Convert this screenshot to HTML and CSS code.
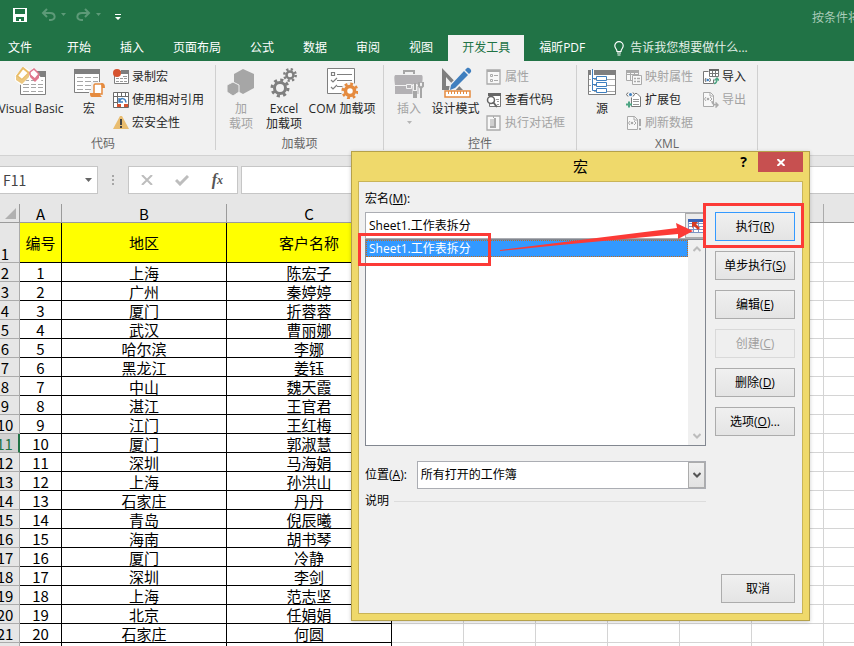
FILE: index.html
```html
<!DOCTYPE html>
<html lang="zh-CN">

<head>
    <meta charset="UTF-8">
    <title>宏</title>
    <link rel="stylesheet" href="styles.css">
</head>

<body>
    <div class="app">
        <header class="titlebar">
            <div class="quick">
                <button type="button" aria-label="保存"><svg width="14" height="14" viewBox="0 0 14 14"><path fill="#fff" fill-rule="evenodd" d="M0 0h14v14H0zM2 1v5h10V1zM3 9v4h3v-2h2v2h3V9z"/></svg></button>
                <button type="button" class="undo" aria-label="撤消"><svg width="26" height="14" viewBox="0 0 26 14"><path fill="none" stroke="#5d9a78" stroke-width="2" d="M6 1L2 5l4 4M2 5h7c6 0 6 7 1 7H8"/><path fill="#5d9a78" d="M20 5h5l-2.500 3z"/></svg></button>
                <button type="button" class="redo" aria-label="恢复"><svg width="26" height="14" viewBox="0 0 26 14"><path fill="none" stroke="#5d9a78" stroke-width="2" d="M9 1l4 4-4 4M13 5H6C0 5 0 12 5 12h2"/><path fill="#5d9a78" d="M20 5h5l-2.500 3z"/></svg></button>
                <button type="button" class="more" aria-label="自定义快速访问工具栏"><svg width="6" height="7" viewBox="0 0 6 7"><path fill="#fff" d="M0 0h6v1H0zM0 3h6L3 6z"/></svg></button>
            </div>
            <span class="doc-name">按条件将工作表拆分</span>
        </header>

        <nav class="tabs">
            <button type="button" class="file">文件</button>
            <button type="button">开始</button>
            <button type="button">插入</button>
            <button type="button">页面布局</button>
            <button type="button">公式</button>
            <button type="button">数据</button>
            <button type="button">审阅</button>
            <button type="button">视图</button>
            <button type="button" class="active">开发工具</button>
            <button type="button">福昕PDF</button>
            <button type="button" class="tell"><svg width="10" height="15" viewBox="0 0 10 15"><path fill="none" stroke="#fff" stroke-width="1.200" d="M3 10.500C3 8 .8 7.500.8 4.800a4.200 4.200 0 0 1 8.400 0C9.200 7.500 7 8 7 10.500zM3 12h4M3.500 14h3"/></svg>告诉我您想要做什么...</button>
        </nav>

        <section class="ribbon">
            <div class="group">
                <div class="group-body">
                    <button type="button" class="big vb">
                        <svg width="32" height="32" viewBox="0 0 32 32"><path fill="#fff" stroke="#7f7f7f" d="M5.500 6.500h25v21h-25z"/><path fill="#7f7f7f" d="M18 4h13v6H18z"/><path stroke="#a6a6a6" d="M8 13.500h6M16 13.500h5M23 13.500h5M8 17.500h6M16 17.500h5M23 17.500h5M8 20.500h6M16 20.500h5M23 20.500h5M8 24.500h6M16 24.500h5M23 24.500h5"/><path fill="#fff" stroke="#fff" stroke-width="2" d="M9 1L1 9v4l5 4 8-8V4zM18 3l-1 5 7 7 2-3z"/><path fill="#fff" stroke="#e9bd68" stroke-width="2" d="M8 1l6 5-7 7-5-4z"/><path fill="#ecc77f" d="M1 9l6 4 7-7v4l-7 7-6-4z"/><path fill="#fff" stroke="#e0778e" stroke-width="1.500" d="M15 5l4-3 5 5-4 5-5-4z"/><path fill="#e0778e" d="M15 7l5 5 4-5v4l-4 4-5-5z"/></svg>
                        <span>Visual Basic</span>
                    </button>
                    <button type="button" class="big macro">
                        <svg width="32" height="32" viewBox="0 0 32 32"><path fill="#fff" stroke="#7f7f7f" d="M1.500 2.500h25v23h-25z"/><path fill="#7f7f7f" d="M1 2h26v5H1z"/><path stroke="#a6a6a6" d="M4 10.500h6M12 10.500h6M20 10.500h5M4 14.500h6M12 14.500h6M20 14.500h5M4 18.500h6M12 18.500h6M4 22.500h6M12 22.500h6"/><path fill="#fff" stroke="#f1f1f1" stroke-width="4" d="M20 17h11v4h-2v8H18v-4h2z"/><path fill="#fff" stroke="#e58b3f" stroke-width="1.500" d="M22 17h7v10h-8V18z"/><path fill="#e58b3f" d="M28 16c3 0 4 1 4 5h-3zM17 26h10c0 2 1 3 2 4H19c-2 0-2-2-2-4z"/></svg>
                        <span>宏</span>
                    </button>
                    <div class="smalls">
                        <button type="button"><svg width="16" height="16" viewBox="0 0 16 16"><path fill="#fff" stroke="#7f7f7f" d="M1.500 2.500h14v12h-14z"/><path fill="#7f7f7f" d="M8 1h8v4H8z"/><path stroke="#9a9a9a" d="M3 9.500h3M7 9.500h3M11 9.500h3M3 12.500h3M7 12.500h3M11 12.500h3M10 7.500h4"/><circle cx="4" cy="4" r="4" fill="#d6532f"/></svg>录制宏</button>
                        <button type="button"><svg width="16" height="16" viewBox="0 0 16 16"><path fill="#fff" stroke="#6b6b6b" d="M.5.5h15v15H.5zM4.500 0v16M0 4.500h16M0 10.500h5M8.500 0v5M12.500 0v5"/><path fill="#fff" d="M5 5h10v6H5z"/><path fill="none" stroke="#3f7fbf" stroke-width="1.500" d="M6 6v4h4M6.500 9.500c1-4 6-4 6.500 1"/><path fill="#d6532f" d="M4 12h4v3H4zM11 12h4v3h-4z"/></svg>使用相对引用</button>
                        <button type="button"><svg width="16" height="16" viewBox="0 0 16 16"><path fill="#e9bd70" d="M7 1h2l7 13H0z"/><path fill="#444" d="M7 4h2v6H7zM7 11h2v2H7z"/></svg>宏安全性</button>
                    </div>
                </div>
                <div class="group-name">代码</div>
            </div>

            <div class="group">
                <div class="group-body">
                    <button type="button" class="big addin" disabled>
                        <svg width="32" height="32" viewBox="0 0 32 32"><path fill="#a6a6a6" d="M18 2l11 5v14l-11 6-9-5V7z"/><path fill="#a6a6a6" stroke="#f1f1f1" d="M8 15l6 3v7l-6 4-6-4v-7z"/></svg>
                        <span>加<br>载项</span>
                    </button>
                    <button type="button" class="big excel">
                        <svg width="32" height="32" viewBox="0 0 32 32"><g fill="none" stroke="#7f7f7f"><circle cx="12" cy="21" r="5.500" stroke-width="3"/><circle cx="12" cy="21" r="8" stroke-width="3" stroke-dasharray="3.100 3.180"/><circle cx="22" cy="8" r="3.500" stroke-width="2.500"/><circle cx="22" cy="8" r="5.700" stroke-width="2.500" stroke-dasharray="2.200 2.280"/></g></svg>
                        <span>Excel<br>加载项</span>
                    </button>
                    <button type="button" class="big com">
                        <svg width="32" height="32" viewBox="0 0 32 32"><path fill="#fff" stroke="#7f7f7f" d="M1.500 1.500h27v25h-27z"/><path fill="none" stroke="#7f7f7f" d="M5.500 5.500h3v3h-3zM11 7.500h15M11 13.500h15M11 19.500h8M5 13l2 2 4-4M5 20l2 2 4-4" stroke-width="1.200"/><circle cx="24" cy="24" r="9" fill="#f1f1f1"/><circle cx="24" cy="24" r="4.500" fill="#fff" stroke="#e58b3f" stroke-width="3.500"/><circle cx="24" cy="24" r="7" fill="none" stroke="#e58b3f" stroke-width="3" stroke-dasharray="2.700 2.800"/></svg>
                        <span>COM 加载项</span>
                    </button>
                </div>
                <div class="group-name">加载项</div>
            </div>

            <div class="group">
                <div class="group-body">
                    <button type="button" class="big insert" disabled>
                        <svg width="32" height="32" viewBox="0 0 32 32"><path fill="none" stroke="#a6a6a6" stroke-width="2" d="M11 7V4h10v3"/><path fill="#b3b1b4" d="M3 8h25c2 0 2 2 1 10H2C1 10 1 8 3 8zM2 19h28v8H2z"/><path fill="#b3b1b4" stroke="#f1f1f1" d="M13.500 17.500h5v4h-5z"/><path stroke="#f1f1f1" stroke-width="5" d="M22 17v14M28 16v14"/><path fill="none" stroke="#a6a6a6" stroke-width="2" d="M22 16v7M26 15v4l2 2 2-2v-4M28 21v10"/><path stroke="#a6a6a6" stroke-width="4" d="M22 24v7"/></svg>
                        <span>插入</span>
                        <svg class="drop" width="5" height="3" viewBox="0 0 5 3"><path fill="#b5b5b5" d="M0 0h5L2.500 3z"/></svg>
                    </button>
                    <button type="button" class="big design">
                        <svg width="32" height="32" viewBox="0 0 32 32"><path fill="#7f7f7f" fill-rule="evenodd" d="M2 1l21 22H2zM6 10v9h8z"/><path fill="#f1f1f1" d="M10 17L27 0l5 5-18 20-6 2z"/><path fill="#fff" stroke="#e58b3f" stroke-width="1.500" d="M5 24h25v6H5z"/><path stroke="#e58b3f" d="M8.500 24v3M11.500 24v3M14.500 24v3M17.500 24v3M20.500 24v3M23.500 24v3M26.500 24v3"/><path fill="#3f7fbf" d="M11 18L24 4l4 4-13 13-5 2zM25 3l2-2c2-1 5 2 4 4l-2 2z"/></svg>
                        <span>设计模式</span>
                    </button>
                    <div class="smalls">
                        <button type="button" disabled><svg width="16" height="16" viewBox="0 0 16 16"><path fill="#f8f8f8" stroke="#aaa" stroke-width="1.300" d="M1 1h13v14H1z"/><path stroke="#aaa" stroke-width="2" d="M1 2h13"/><path fill="none" stroke="#aaa" d="M4.500 5.500h2v2h-2zM4.500 10.500h2v2h-2zM8 6.500h4M8 11.500h4"/></svg>属性</button>
                        <button type="button"><svg width="16" height="16" viewBox="0 0 16 16"><path fill="#fff" stroke="#777" d="M3.500 2.500h11v12h-11z"/><path fill="#666" d="M2 1h13v3H2z"/><path stroke="#999" d="M10 7.500h3M11 9.500h2M11 12.500h2"/><circle cx="5" cy="8" r="3.500" fill="#fff" stroke="#666" stroke-width="1.500"/><path stroke="#666" stroke-width="2" d="M7 10l4 5"/></svg>查看代码</button>
                        <button type="button" disabled><svg width="16" height="16" viewBox="0 0 16 16"><path fill="#f8f8f8" stroke="#aaa" stroke-width="1.300" d="M1 1h13v14H1z"/><path stroke="#aaa" d="M7.500 1v14" stroke-dasharray="2 8"/><path fill="#d0d0d0" d="M4 4h4v8H4z"/><path fill="#aaa" d="M8 3h2v10H4v-2h4z"/></svg>执行对话框</button>
                    </div>
                </div>
                <div class="group-name">控件</div>
            </div>

            <div class="group">
                <div class="group-body">
                    <button type="button" class="big source">
                        <svg width="32" height="32" viewBox="0 0 32 32"><path fill="#fff" stroke="#7f7f7f" d="M2.500 3.500h27v24h-27z"/><path fill="#7f7f7f" d="M2 3h28v5H2z"/><path stroke="#a6a6a6" d="M3 12.500h8M21 12.500h8M3 18.500h8M21 18.500h8M3 24.500h8M21 24.500h8"/><path stroke="#fff" stroke-width="3" d="M6.500 3v22"/><path fill="#fff" stroke="#3f7fbf" d="M10.500 9.500h10v4h-10zM10.500 15.500h10v4h-10zM10.500 21.500h10v4h-10z"/><path fill="none" stroke="#3f7fbf" d="M6.500 2v21.500h4M6.500 11.500h4M6.500 17.500h4"/></svg>
                        <span>源</span>
                    </button>
                    <div class="smalls wide">
                        <button type="button" disabled><svg width="16" height="16" viewBox="0 0 16 16"><path fill="#f8f8f8" stroke="#aaa" d="M.5 1.500h12v10H.5zM.5 5.500h12M4.500 2v9M8.500 2v9"/><path fill="#aaa" d="M0 1h13v3H0z"/><path fill="#f8f8f8" stroke="#aaa" d="M6.500 6.500h9v9h-9z"/><path stroke="#aaa" d="M8 9.500h2M11 9.500h3M8 12.500h2M11 12.500h3" stroke-width="1.500"/></svg>映射属性</button>
                        <button type="button"><svg width="16" height="16" viewBox="0 0 16 16"><path fill="#fff" stroke="#777" d="M5.500 5.500V14.500h9V5L11 1.500H9"/><path stroke="#999" d="M7 7.500h6M7 9.500h6M7 12.500h6"/><path fill="none" stroke="#666" d="M2 .5L.5 2.500 2 4.500M7 .5l1.500 2L7 4.500"/><circle cx="4.500" cy="2.500" r="1.500" fill="#3f7fbf"/><path stroke="#4da583" stroke-width="2" d="M0 12.500h6M3 9.500v6"/></svg>扩展包</button>
                        <button type="button" disabled><svg width="16" height="16" viewBox="0 0 16 16"><path fill="#f8f8f8" stroke="#aaa" d="M1.500 1.500h7l3 3v10h-10z"/><path fill="none" stroke="#aaa" d="M8 1v4h4M4 6L2.500 8 4 10M8 6l2 2-2 2"/><circle cx="6" cy="8" r="1.300" fill="#aaa"/><path stroke="#aaa" stroke-width="2" d="M14 4v7M14 13v2"/></svg>刷新数据</button>
                    </div>
                    <div class="smalls">
                        <button type="button"><svg width="16" height="16" viewBox="0 0 16 16"><path fill="#fff" stroke="#777" d="M5.500 2.500h-5v12h10v-4"/><path fill="#fff" stroke="#777" d="M6.500.5h9v7h-9zM9.500 1v6M12.500 1v6M7 4.500h9"/><path fill="#666" d="M6 0h10v2H6z"/><path fill="none" stroke="#666" d="M3 9l-1 2 1 2M6.500 9l1 2-1 2"/><circle cx="4.700" cy="11" r="1.300" fill="#3f7fbf"/><path fill="none" stroke="#4da583" stroke-width="1.500" d="M11 14.500c2 0 3-1 3-5M11.500 11.500L14 9l2 2.500"/></svg>导入</button>
                        <button type="button" disabled><svg width="16" height="16" viewBox="0 0 16 16"><path fill="#f8f8f8" stroke="#aaa" d="M.5.5h7l3 3v11H.5z"/><path fill="none" stroke="#aaa" d="M7 1v3h4M3 5L1.500 7 3 9M7 5l2 2-2 2"/><circle cx="5" cy="7" r="1.300" fill="#aaa"/><path fill="none" stroke="#aaa" stroke-width="1.500" d="M9 9c0 3 2 4 5 4M12.500 10.500L15 13l-2.500 2.500"/></svg>导出</button>
                    </div>
                </div>
                <div class="group-name">XML</div>
            </div>
        </section>

        <section class="formula-bar">
            <div class="name-box">
                <input type="text" value="F11" aria-label="名称框">
                <button type="button" aria-label="展开名称"><svg width="7" height="4" viewBox="0 0 7 4"><path fill="#666" d="M0 0h7L3.500 4z"/></svg></button>
            </div>
            <svg class="grip" width="2" height="10" viewBox="0 0 2 10"><path fill="#a6a6a6" d="M0 0h2v2H0zM0 4h2v2H0zM0 8h2v2H0z"/></svg>
            <div class="fx">
                <button type="button" aria-label="取消输入"><svg width="12" height="10" viewBox="0 0 12 10"><path stroke="#bdbdbd" stroke-width="2" d="M1 0l10 10M11 0L1 10"/></svg></button>
                <button type="button" aria-label="输入"><svg width="14" height="11" viewBox="0 0 14 11"><path fill="none" stroke="#bdbdbd" stroke-width="3" d="M1 5l4 4 8-8"/></svg></button>
                <button type="button" class="fn" aria-label="插入函数"><i>f</i><sub>x</sub></button>
            </div>
            <input type="text" class="formula" aria-label="编辑栏">
        </section>

        <table class="sheet">
            <colgroup>
                <col class="c-num">
                <col class="c-a">
                <col class="c-b">
                <col class="c-c">
                <col>
            </colgroup>
            <thead>
                <tr><th class="corner"><svg width="11" height="11" viewBox="0 0 11 11"><path fill="#b1b1b1" d="M11 0v11H0z"/></svg></th><th>A</th><th>B</th><th>C</th><th class="blank"></th></tr>
            </thead>
            <tbody>
                <tr class="head"><th>1</th><td>编号</td><td>地区</td><td>客户名称</td><td class="blank"></td></tr>
                <tr><th>2</th><td>1</td><td>上海</td><td>陈宏子</td><td class="blank"></td></tr>
                <tr><th>3</th><td>2</td><td>广州</td><td>秦婷婷</td><td class="blank"></td></tr>
                <tr><th>4</th><td>3</td><td>厦门</td><td>折蓉蓉</td><td class="blank"></td></tr>
                <tr><th>5</th><td>4</td><td>武汉</td><td>曹丽娜</td><td class="blank"></td></tr>
                <tr><th>6</th><td>5</td><td>哈尔滨</td><td>李娜</td><td class="blank"></td></tr>
                <tr><th>7</th><td>6</td><td>黑龙江</td><td>姜钰</td><td class="blank"></td></tr>
                <tr><th>8</th><td>7</td><td>中山</td><td>魏天霞</td><td class="blank"></td></tr>
                <tr><th>9</th><td>8</td><td>湛江</td><td>王官君</td><td class="blank"></td></tr>
                <tr><th>10</th><td>9</td><td>江门</td><td>王红梅</td><td class="blank"></td></tr>
                <tr class="current"><th>11</th><td>10</td><td>厦门</td><td>郭淑慧</td><td class="blank"></td></tr>
                <tr><th>12</th><td>11</td><td>深圳</td><td>马海娟</td><td class="blank"></td></tr>
                <tr><th>13</th><td>12</td><td>上海</td><td>孙洪山</td><td class="blank"></td></tr>
                <tr><th>14</th><td>13</td><td>石家庄</td><td>丹丹</td><td class="blank"></td></tr>
                <tr><th>15</th><td>14</td><td>青岛</td><td>倪辰曦</td><td class="blank"></td></tr>
                <tr><th>16</th><td>15</td><td>海南</td><td>胡书琴</td><td class="blank"></td></tr>
                <tr><th>17</th><td>16</td><td>厦门</td><td>冷静</td><td class="blank"></td></tr>
                <tr><th>18</th><td>17</td><td>深圳</td><td>李剑</td><td class="blank"></td></tr>
                <tr><th>19</th><td>18</td><td>上海</td><td>范志坚</td><td class="blank"></td></tr>
                <tr><th>20</th><td>19</td><td>北京</td><td>任娟娟</td><td class="blank"></td></tr>
                <tr><th>21</th><td>20</td><td>石家庄</td><td>何圆</td><td class="blank"></td></tr>
                <tr><th></th><td></td><td></td><td></td><td class="blank"></td></tr>
            </tbody>
        </table>
    </div>

    <div class="dialog" role="dialog" aria-labelledby="dialog-title">
        <div class="dialog-bar">
            <h1 id="dialog-title">宏</h1>
            <div class="dialog-tools">
                <button type="button" class="help" aria-label="帮助">?</button>
                <button type="button" class="close" aria-label="关闭"><svg width="8" height="7" viewBox="0 0 8 7"><path stroke="#fff" stroke-width="2" d="M.5 0l7 7M7.500 0l-7 7"/></svg></button>
            </div>
        </div>
        <form class="dialog-body">
            <div class="fields">
                <label for="macro-name">宏名(<u>M</u>):</label>
                <div class="macro-name">
                    <input type="text" id="macro-name" value="Sheet1.工作表拆分">
                    <button type="button" aria-label="选择引用"><svg width="16" height="14" viewBox="0 0 16 14"><path fill="#fff" stroke="#7d94c4" d="M.5.5h15v13H.5zM0 4.500h16M0 7.500h16M0 10.500h16M5.500 0v14M10.500 0v14"/><path fill="#3c64b4" d="M0 0h16v3H0z"/><path fill="#d63c22" d="M4 3h6L8 5l4 4-2 2-4-4-2 2z"/></svg></button>
                </div>
                <div class="list">
                    <ul role="listbox" aria-label="宏列表">
                        <li role="option" aria-selected="true">Sheet1.工作表拆分</li>
                    </ul>
                    <div class="scroll">
                        <svg width="8" height="6" viewBox="0 0 8 6"><path fill="none" stroke="#bcbcbc" stroke-width="2" d="M.5 5L4 1.500 7.500 5"/></svg>
                        <svg width="8" height="6" viewBox="0 0 8 6"><path fill="none" stroke="#bcbcbc" stroke-width="2" d="M.5 1L4 4.500 7.500 1"/></svg>
                    </div>
                </div>
                <div class="place">
                    <label for="place">位置(<u>A</u>):</label>
                    <div class="combo">
                        <select id="place"><option>所有打开的工作簿</option></select>
                        <span class="combo-arrow"><svg width="8" height="6" viewBox="0 0 8 6"><path fill="none" stroke="#555" stroke-width="2" d="M.5 1L4 4.500 7.500 1"/></svg></span>
                    </div>
                </div>
                <div class="note">说明</div>
            </div>
            <div class="actions">
                <button type="button" class="default">执行(<u>R</u>)</button>
                <button type="button">单步执行(<u>S</u>)</button>
                <button type="button">编辑(<u>E</u>)</button>
                <button type="button" disabled>创建(<u>C</u>)</button>
                <button type="button">删除(<u>D</u>)</button>
                <button type="button">选项(<u>O</u>)...</button>
                <button type="button" class="cancel">取消</button>
            </div>
        </form>
        <!-- red marks drawn over the dialog -->
        <div class="mark mark-item"></div>
        <div class="mark mark-run"></div>
        <svg class="mark-arrow" width="194" height="30" viewBox="0 0 194 30"><path fill="#fc3a36" d="M0 27L177 5l-1-5 17 8-15 8v-5L60 22 0 28z"/></svg>
    </div>
</body>

</html>
```
FILE: styles.css
```css
* {
    box-sizing: border-box;
    margin: 0;
    padding: 0;
}

body {
    height: 100vh;
    overflow: hidden;
    position: relative;
    background: #fff;
    color: #262626;
    font: 12px/16px "Open Sans", "Noto Sans CJK SC", sans-serif;
}

button,
input,
select {
    border: 0;
    background: none;
    color: inherit;
    font: inherit;
}

svg {
    display: block;
    flex: none;
}

.app {
    display: flex;
    flex-direction: column;
}

/* title bar */

.titlebar {
    display: flex;
    align-items: center;
    justify-content: space-between;
    height: 35px;
    background: #217346;
    overflow: hidden;
}

.quick {
    display: flex;
    align-items: center;
    padding: 0 0 5px 13px;
}

.quick .undo {
    margin-left: 14px;
}

.quick .redo {
    margin-left: 9px;
}

.quick .more {
    margin: 4px 0 0 13px;
}

.doc-name {
    flex: none;
    width: 42px;
    white-space: nowrap;
    color: #a9cbb8;
}

/* tabs */

.tabs {
    display: flex;
    gap: 1px;
    height: 26px;
    background: #217346;
}

.tabs button {
    padding: 0 14px;
    color: #fff;
    line-height: 24px;
    white-space: nowrap;
}

.tabs .file {
    padding: 0 20px 0 8px;
}

.tabs .active {
    background: #f1f1f1;
    color: #217346;
}

.tabs .tell {
    display: flex;
    align-items: center;
    gap: 6px;
    color: #e3efe8;
}

/* ribbon */

.ribbon {
    display: flex;
    height: 95px;
    margin-left: -9px;
    padding: 4px 0 5px;
    background: #f1f1f1;
    border-bottom: 1px solid #d2d2d2;
}

.group {
    display: flex;
    flex-direction: column;
    justify-content: space-between;
    border-right: 1px solid #d0d0d0;
}

.group-body {
    display: flex;
    padding: 0 11px 0 5px;
}

.group:first-child .group-body {
    padding-left: 0;
}

.group:nth-child(2) .group-body {
    padding-right: 6px;
}

.group-name {
    text-align: center;
    color: #666;
    line-height: 12px;
}

.group button:disabled {
    color: #a3a3a3;
}

.big {
    display: flex;
    flex-direction: column;
    align-items: center;
    width: 40px;
    padding-top: 2px;
    line-height: 15px;
    white-space: nowrap;
}

.big span {
    margin-top: 2px;
}

.big .drop {
    margin-top: 5px;
}

.vb {
    width: 80px;
}

.macro {
    width: 36px;
}

.excel {
    width: 46px;
}

.com {
    width: 70px;
}

.design {
    width: 53px;
}

.smalls {
    display: flex;
    flex-direction: column;
    padding-left: 4px;
}

.smalls button {
    display: flex;
    align-items: center;
    gap: 3px;
    height: 23px;
    white-space: nowrap;
}

.macro + .smalls {
    padding-left: 6px;
}

.wide {
    padding-right: 6px;
}

/* formula bar */

.formula-bar {
    display: flex;
    height: 48px;
    padding: 10px 0;
    background: #e6e6e6;
}

.name-box,
.fx,
.formula {
    background: #fff;
    border: 1px solid #c6c6c6;
}

.name-box {
    display: flex;
    align-items: center;
    width: 98px;
    border-left: 0;
}

.name-box input {
    width: 85px;
    padding-left: 3px;
    color: #444;
    font-family: "Noto Sans CJK SC", sans-serif;
    font-size: 14px;
}

.grip {
    align-self: center;
    margin: 0 14px;
}

.fx {
    display: flex;
    width: 110px;
    padding-right: 2px;
}

.fx button {
    display: flex;
    flex: 1;
    align-items: center;
    justify-content: center;
}

.fn {
    color: #555;
    font-family: "Liberation Serif", serif;
    font-size: 16px;
    font-weight: bold;
}

.fn sub {
    font-size: 12px;
    font-style: italic;
}

.formula {
    flex: 1;
    min-width: 0;
    margin-left: 3px;
    border-right: 0;
}

/* sheet */

.sheet {
    width: calc(100% + 9px);
    margin-left: -9px;
    table-layout: fixed;
    border-collapse: separate;
    border-spacing: 0;
    color: #000;
    font: 15px/17px "Noto Sans CJK SC", sans-serif;
    text-align: center;
}

.c-num {
    width: 29px;
}

.c-a {
    width: 42px;
}

.c-b,
.c-c {
    width: 165px;
}

.sheet th,
.sheet td {
    height: 19px;
    border-right: 1px solid #000;
    border-bottom: 1px solid #000;
    white-space: nowrap;
}

.sheet th {
    background: #e6e6e6;
    border-color: #ababab;
    font-weight: normal;
    vertical-align: bottom;
}

.sheet thead th {
    border-color: #9b9b9b;
}

.corner svg {
    margin: 0 0 3px 14px;
}

.sheet .head th,
.sheet .head td {
    height: 40px;
}

.head td {
    background: #ff0;
}

.sheet .current th {
    background: #d2d2d2;
    border-right: 2px solid #217346;
    color: #217346;
}

.sheet td.blank {
    border-right: 0;
    border-color: #d4d4d4;
    background: repeating-linear-gradient(to right, #fff 0, #fff 71px, #d4d4d4 71px, #d4d4d4 72px);
}

.sheet th.blank {
    border-right: 0;
    background: repeating-linear-gradient(to right, #e6e6e6 0, #e6e6e6 71px, #ababab 71px, #ababab 72px);
}

/* macro dialog */

.dialog {
    position: absolute;
    top: 151px;
    left: 351px;
    display: flex;
    flex-direction: column;
    width: 459px;
    height: 470px;
    padding: 0 6px 6px;
    background: #efd96b;
    border: 1px solid #b5a14b;
    box-shadow: 0 1px 4px rgba(0, 0, 0, .2);
    color: #000;
}

.dialog-bar {
    display: grid;
    grid-template-columns: 1fr auto 1fr;
    height: 29px;
}

.dialog-bar h1 {
    grid-column: 2;
    font-size: 15px;
    font-weight: normal;
    line-height: 29px;
}

.dialog-tools {
    display: flex;
    justify-content: flex-end;
    align-items: flex-start;
}

.help {
    width: 29px;
    font-size: 14px;
    font-weight: bold;
    line-height: 20px;
}

.close {
    display: flex;
    align-items: center;
    justify-content: center;
    width: 45px;
    height: 20px;
    background: #c75050;
}

.dialog-body {
    display: flex;
    flex: 1;
    gap: 9px;
    padding: 9px 7px 10px 6px;
    background: #f0f0f0;
    border: 1px solid #c9b458;
}

.fields {
    flex: 1;
    min-width: 0;
}

.macro-name {
    display: flex;
    height: 27px;
    margin-top: 5px;
    background: #fff;
    border: 1px solid #abadb3;
}

.macro-name input {
    flex: 1;
    min-width: 0;
    padding-left: 3px;
}

.macro-name button {
    width: 20px;
    padding-left: 2px;
    background: #ececec;
    border: 1px solid #acacac;
    overflow: hidden;
}

.list {
    display: flex;
    height: 207px;
    background: #fff;
    border: 1px solid #828790;
}

.list ul {
    flex: 1;
    list-style: none;
}

.list li {
    padding-left: 2px;
    background: #39f;
    border: 1px dotted #c66a1a;
    color: #fff;
    line-height: 15px;
}

.scroll {
    display: flex;
    flex-direction: column;
    align-items: center;
    justify-content: space-between;
    width: 17px;
    padding: 6px 0;
    background: #f0f0f0;
}

.place {
    display: flex;
    align-items: center;
    gap: 10px;
    margin-top: 15px;
}

.combo {
    position: relative;
    flex: 1;
    height: 28px;
    background: #fff;
    border: 1px solid #abadb3;
}

.combo select {
    width: 100%;
    height: 100%;
    padding-left: 3px;
    appearance: none;
}

.combo-arrow {
    position: absolute;
    top: 0;
    right: 0;
    bottom: 0;
    display: flex;
    align-items: center;
    justify-content: center;
    width: 17px;
    background: linear-gradient(#f0f0f0, #e2e2e2);
    border: 1px solid #acacac;
    pointer-events: none;
}

.note {
    display: flex;
    align-items: center;
    gap: 5px;
    margin-top: 4px;
}

.note::after {
    content: "";
    flex: 1;
    height: 1px;
    background: #dcdcdc;
}

.actions {
    display: flex;
    flex-direction: column;
    align-items: flex-end;
    gap: 10px;
    padding-top: 21px;
}

.actions button {
    width: 80px;
    height: 29px;
    background: linear-gradient(#f0f0f0, #e4e4e4);
    border: 1px solid #acacac;
}

.actions .default {
    border-color: #39f;
}

.actions button:disabled {
    background: #efefef;
    border-color: #d9d9d9;
    color: #a0a0a0;
}

.actions .cancel {
    width: 74px;
    margin-top: auto;
}

/* marks */

.mark {
    position: absolute;
    border: 3px solid #fc3a36;
}

.mark-item {
    top: 81px;
    left: 6px;
    width: 133px;
    height: 33px;
}

.mark-run {
    top: 51px;
    left: 351px;
    width: 101px;
    height: 45px;
}

.mark-arrow {
    position: absolute;
    top: 71px;
    left: 148px;
}
```
